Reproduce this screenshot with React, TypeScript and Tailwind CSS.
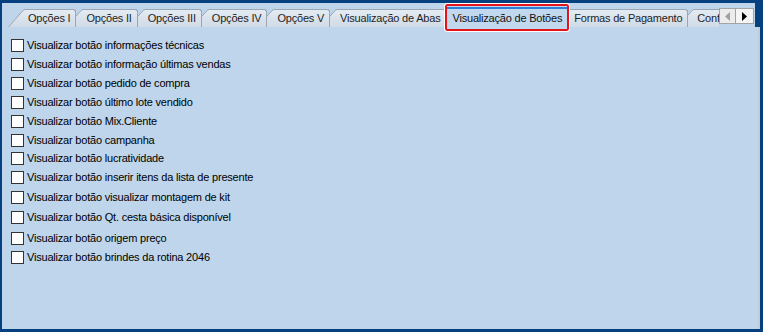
import React from "react";

type TabDef = { label: string; gap: string; active?: boolean; body?: string };

const tabs: TabDef[] = [
  { label: "Opções I", gap: "ml-[6px]" },
  { label: "Opções II", gap: "-ml-[10px]" },
  { label: "Opções III", gap: "-ml-[10px]" },
  { label: "Opções IV", gap: "-ml-[10px]" },
  { label: "Opções V", gap: "-ml-[10px]" },
  { label: "Visualização de Abas", gap: "-ml-[10px]" },
  { label: "Visualização de Botões", gap: "-ml-[1px]", active: true },
  { label: "Formas de Pagamento", gap: "-ml-[15px]" },
  { label: "Conf", gap: "-ml-[11px]", body: "rounded-none border-r-0 pr-[4px]" },
];

const options = [
  { label: "Visualizar botão informações técnicas", h: "h-[19px]" },
  { label: "Visualizar botão informação últimas vendas", h: "h-[19px]" },
  { label: "Visualizar botão pedido de compra", h: "h-[19px]" },
  { label: "Visualizar botão último lote vendido", h: "h-[19px]" },
  { label: "Visualizar botão Mix.Cliente", h: "h-[19px]" },
  { label: "Visualizar botão campanha", h: "h-[18px]" },
  { label: "Visualizar botão lucratividade", h: "h-[18px]" },
  { label: "Visualizar botão inserir itens da lista de presente", h: "h-[20px]" },
  { label: "Visualizar botão visualizar montagem de kit", h: "h-[20px]" },
  { label: "Visualizar botão Qt. cesta básica disponível", h: "h-[21px]" },
  { label: "Visualizar botão origem preço", h: "h-[21px]" },
  { label: "Visualizar botão brindes da rotina 2046", h: "h-[17px]" },
];

function Tab({ label, gap, z, body = "" }: { label: string; gap: string; z: number; body?: string }) {
  const gid = `tabgrad${z}`;
  return (
    <div className={`relative mt-[6px] flex h-[18px] shrink-0 ${gap}`} style={{ zIndex: z }}>
      <svg width="17" height="18" viewBox="0 0 17 18" className="block shrink-0">
        <defs>
          <linearGradient id={gid} x1="0" y1="0" x2="0" y2="1">
            <stop offset="0" stopColor="#e4ebf2" />
            <stop offset="1" stopColor="#cfdbe7" />
          </linearGradient>
        </defs>
        <path d="M0 18 L15 1.6 Q16 0.5 17 0.5 L17 18 Z" fill={`url(#${gid})`} />
        <path d="M0.4 18 L15 1.6 Q16 0.5 17 0.5" fill="none" stroke="#9aa6b2" />
      </svg>
      <div
        className={`flex h-full items-center whitespace-nowrap rounded-tr-[3px] border-t border-r border-[#9aa6b2] bg-gradient-to-b from-[#e4ebf2] to-[#cfdbe7] pl-[3px] pr-[5px] text-[#1e1e1e] ${body}`}
      >
        {label}
      </div>
    </div>
  );
}

function ActiveTab({ label, gap }: { label: string; gap: string }) {
  return (
    <div className={`relative z-20 mt-[1px] shrink-0 ${gap}`}>
      <div className="h-[27px] rounded-[2px] border-2 border-[#e4141b] outline outline-1 outline-white">
        <div className="flex h-full flex-col bg-[#c2d8ee]">
          <div className="mt-[1px] h-[2px] bg-[#2c7fd6]" />
          <div className="flex flex-1 items-center whitespace-nowrap px-[5px] pb-[2px] text-[#111]">
            {label}
          </div>
        </div>
      </div>
    </div>
  );
}

function Checkbox() {
  return <div className="h-[13px] w-[13px] shrink-0 border border-[#333] bg-white" />;
}

export default function App() {
  return (
    <div className="flex h-[332px] w-[763px] flex-col bg-[#06417f] pb-[3px] pl-[2px] pr-[3px] pt-[3px] font-['Liberation_Sans',Arial,sans-serif] text-[11px] tracking-[-0.2px]">
      {/* tab strip */}
      <div className="relative z-10 flex h-[24px] shrink-0">
        <div className="flex w-[753px] bg-[#bed5eb]">
          <div className="flex w-[717px] overflow-x-clip">
            {tabs.map((t, i) =>
              t.active ? (
                <ActiveTab key={t.label} label={t.label} gap={t.gap} />
              ) : (
                <Tab key={t.label} label={t.label} gap={t.gap} z={tabs.length - i} body={t.body} />
              )
            )}
          </div>
          <div className="mt-[5px] flex h-[16px]">
            <div className="flex w-[17px] items-center justify-center border border-[#a3a3a3] bg-[#ececec]">
              <svg width="5" height="9" viewBox="0 0 5 9">
                <path d="M5 0 L0 4.5 L5 9 Z" fill="#a0a0a0" />
              </svg>
            </div>
            <div className="flex w-[18px] items-center justify-center border border-l-0 border-[#a3a3a3] bg-[#f5f5f5]">
              <svg width="5" height="9" viewBox="0 0 5 9">
                <path d="M0 0 L5 4.5 L0 9 Z" fill="#000" />
              </svg>
            </div>
          </div>
        </div>
      </div>

      {/* panel */}
      <div className="flex flex-1 flex-col border-r-2 border-[#c5cbd1] bg-[#bed5eb] pl-[9px] pt-[9px]">
        {options.map((o) => (
          <div key={o.label} className={`flex items-center gap-[3px] ${o.h}`}>
            <Checkbox />
            <span className="whitespace-nowrap text-black">{o.label}</span>
          </div>
        ))}
      </div>
    </div>
  );
}
